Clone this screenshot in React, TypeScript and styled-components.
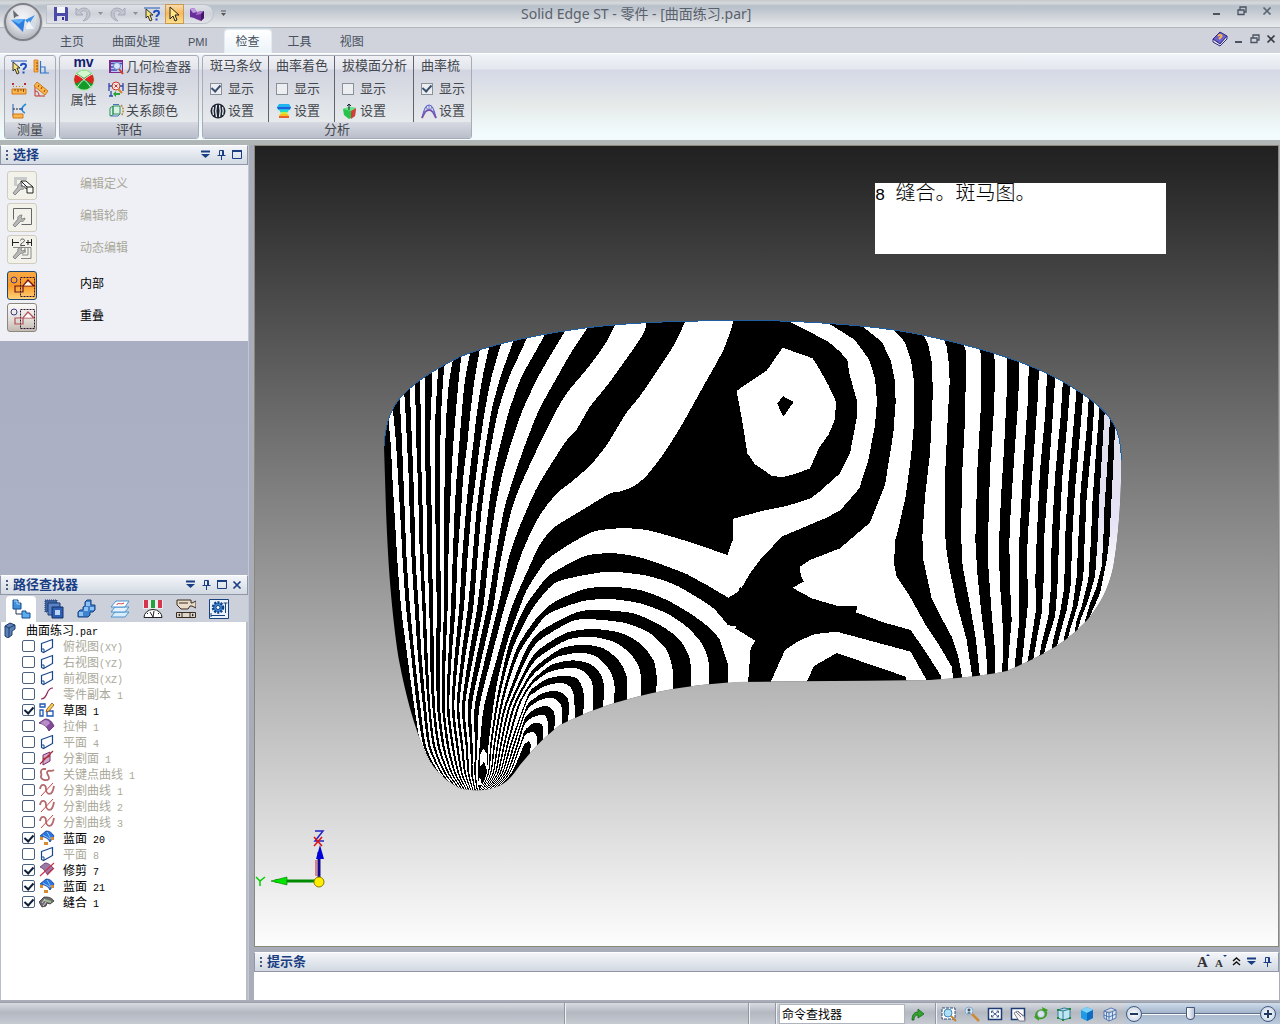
import React from "react";
import styled, { createGlobalStyle, css } from "styled-components";

const GlobalStyle = createGlobalStyle`
  * { box-sizing: border-box; }
  html, body, #root { height: 100%; }
  body { margin: 0; font-family: "Liberation Sans", "Noto Sans CJK SC", sans-serif; font-size: 12px; color: #000; overflow: hidden; }
  button, input { font: inherit; color: inherit; }
  button { padding: 0; border: 0; background: none; }
  ul { margin: 0; padding: 0; list-style: none; }
  h1, h2, h3 { margin: 0; font: inherit; }
`;

/* ---------- shell ---------- */
const Shell = styled.div`
  display: flex;
  flex-direction: column;
  height: 100vh;
  background: #a9adb9;
  position: relative;
`;
const TitleBar = styled.header`
  height: 28px;
  flex: none;
  display: flex;
  align-items: center;
  padding: 0 8px 0 46px;
  border-bottom: 1px solid #b1b6bd;
  background: linear-gradient(#c6c9cc 0, #d7dadd 3px, #b7c0ca 6px, #bfc6cf 10px, #d3d7dc 18px, #e8eaed 27px);
`;
const QuickBar = styled.div`
  display: flex;
  align-items: center;
  height: 20px;
  width: 168px;
  padding: 0 10px 0 4px;
  gap: 3px;
  border-radius: 0 10px 10px 0;
  border: 1px solid #bdc1c9;
  background: linear-gradient(#dfe1e6, #cfd2da 50%, #e1e3e8);
`;
const QuickButton = styled.button<{ $on?: boolean; $slim?: boolean }>`
  width: ${p => (p.$slim ? 10 : 19)}px;
  height: 20px;
  flex: none;
  display: flex;
  align-items: center;
  justify-content: center;
  ${p => p.$on && css`
    border: 1px solid #c79a50;
    background: linear-gradient(#f9dcae, #f8b75c 45%, #fbe08d);
  `}
`;
const WindowTitle = styled.h1`
  flex: 1;
  padding-left: 288px;
  color: #59616c;
  font: 14px/20px "Noto Sans", "Noto Sans CJK SC", sans-serif;
  white-space: nowrap;
`;
const WindowButtons = styled.div<{ $gap: number }>`
  display: flex;
  align-items: center;
  align-self: flex-start;
  height: 22px;
  gap: ${p => p.$gap}px;
  color: #4a5360;
`;
const AppButton = styled.button`
  position: absolute;
  left: 4px;
  top: 3px;
  width: 38px;
  height: 38px;
  border-radius: 50%;
  border: 2px solid #7e8187;
  background: radial-gradient(circle at 50% 35%, #f3f4f7 0, #dcdee3 45%, #b7bac1 75%, #f4f4f4 100%);
  box-shadow: 0 0 0 1px #c9ccd2;
  display: flex;
  align-items: center;
  justify-content: center;
`;
const TabBar = styled.nav`
  height: 25px;
  flex: none;
  display: flex;
  align-items: flex-end;
  gap: 6px;
  padding: 0 4px 0 49px;
  background: #d0d3db;
`;
const Tab = styled.button<{ $active?: boolean; $latin?: boolean }>`
  height: 23px;
  padding: 0 11px;
  line-height: 20px;
  font-size: ${p => (p.$latin ? 11 : 12)}px;
  color: #47515f;
  border-radius: 3px 3px 0 0;
  ${p => p.$active && css`
    background: linear-gradient(#fff, #ebf3f8);
    box-shadow: 0 0 0 1px #e6eaf0, 0 -1px 3px #bfe6ee;
  `}
`;
const Spacer = styled.span`
  flex: 1;
`;
const Ribbon = styled.section`
  flex: none;
  height: 92px;
  display: flex;
  align-items: flex-start;
  gap: 3px;
  padding: 1px 4px 0;
  border-top: 1px solid #fff;
  border-bottom: 5px solid #b0b5b6;
  background: linear-gradient(#f1f4f9 0, #e3e8ee 15px, #d4d8e6 16px, #d9dde7 26px, #e5eae9 50px, #f2fcff 82px);
`;
const Group = styled.section`
  height: 84px;
  border: 1px solid #a8acb6;
  border-radius: 3px;
  overflow: hidden;
  display: flex;
  flex-direction: column;
  color: #44484f;
  font-size: 13px;
  background: linear-gradient(#f0f1f5 0, #e3e5ec 13px, #d2d4e0 14px, #d8dae3 30px, #e6eaec 66px);
`;
const GroupBody = styled.div`
  height: 66px;
  display: flex;
`;
const GroupName = styled.h3`
  flex: 1;
  text-align: center;
  line-height: 15px;
  background: linear-gradient(#d7dae1, #b9becb);
`;
const MeasureGrid = styled.div`
  display: grid;
  grid-template-columns: 22px 22px;
  grid-auto-rows: 22px;
  place-items: center;
  padding: 0 3px;
`;
const IconButton = styled.button`
  display: flex;
  align-items: center;
  justify-content: center;
`;
const BigButton = styled.button`
  width: 47px;
  display: flex;
  flex-direction: column;
  align-items: center;
  line-height: 18px;
  font-size: 13px;
`;
const BigCaption = styled.b`
  font-size: 14px;
  line-height: 13px;
  color: #11206f;
`;
const Stack = styled.div`
  display: flex;
  flex-direction: column;
  padding: 0 7px 0 1px;
`;
const RibbonRow = styled.button`
  height: 22px;
  display: flex;
  align-items: center;
  gap: 2px;
  padding-bottom: 1px;
  line-height: 20px;
  white-space: nowrap;
`;
const AnalysisColumn = styled.div`
  display: flex;
  flex-direction: column;
  padding: 0 6px 0 7px;
  white-space: nowrap;
  & + & { border-left: 1px solid #5f646e; }
`;
const RibbonText = styled.span`
  height: 22px;
  line-height: 20px;
`;
const RibbonCheck = styled.label`
  height: 22px;
  display: flex;
  align-items: center;
  gap: 6px;
  padding-bottom: 1px;
  line-height: 20px;
`;
const Check = styled.input<{ $tree?: boolean }>`
  appearance: none;
  margin: 0;
  flex: none;
  width: ${p => (p.$tree ? 13 : 12)}px;
  height: 12px;
  border: 1px solid ${p => (p.$tree ? "#4b617f" : "#8a9098")};
  border-radius: ${p => (p.$tree ? 2 : 0)}px;
  background: ${p => (p.$tree ? "#fff" : "#eceef1")};
  display: flex;
  align-items: center;
  justify-content: center;
  &:checked::after {
    content: "";
    width: 4px;
    height: 7px;
    margin-bottom: 2px;
    border: solid ${p => (p.$tree ? "#0c1f38" : "#39506f")};
    border-width: 0 2px 2px 0;
    transform: rotate(42deg);
  }
`;

/* ---------- workspace ---------- */
const Workspace = styled.main`
  flex: 1;
  min-height: 0;
  display: flex;
  gap: 5px;
  padding-right: 1px;
`;
const Sidebar = styled.aside`
  width: 249px;
  flex: none;
  display: flex;
  flex-direction: column;
  background: linear-gradient(#a6abc0, #b3b8ca);
  border-right: 1px solid #c3c7d1;
`;
const PanelHead = styled.header`
  height: 20px;
  flex: none;
  display: flex;
  align-items: center;
  gap: 4px;
  padding: 0 5px 1px 5px;
  border: 1px solid #8f97a7;
  border-top-color: #fff;
  color: #1a3e83;
  background: linear-gradient(#f3f5f9, #d2d9e2);
`;
const PanelTitle = styled.h2`
  flex: 1;
  font-weight: 700;
  font-size: 13px;
  line-height: 18px;
`;
const PanelTools = styled.div`
  display: flex;
  align-items: center;
  gap: 5px;
`;
const SelectBody = styled.div`
  background: #eff0f6;
  padding: 6px 7px 9px;
  display: flex;
  flex-direction: column;
  gap: 3px;
`;
const SelectRow = styled.button<{ $off?: boolean; $first?: boolean }>`
  display: flex;
  align-items: flex-start;
  gap: 43px;
  height: 29px;
  line-height: 26px;
  margin-top: ${p => (p.$first ? 4 : 0)}px;
  color: ${p => (p.$off ? "#a9a899" : "#000")};
`;
const ToolFace = styled.span<{ $kind: "off" | "hot" | "plain" }>`
  width: 30px;
  height: 29px;
  border-radius: 3px;
  border: 1px solid ${p => (p.$kind === "off" ? "#cfcdbf" : p.$kind === "hot" ? "#1c4773" : "#8c8880")};
  background: ${p => p.$kind === "off" ? "#f2f2ea" : p.$kind === "hot"
    ? "linear-gradient(#f9a945, #fb9a26 50%, #ffd27a)" : "linear-gradient(#fbfaf8, #e2dcd6 60%, #c2b9b1)"};
`;
const Gap = styled.div`
  flex: 1;
`;
const PathFinder = styled.section`
  height: 425px;
  flex: none;
  display: flex;
  flex-direction: column;
`;
const FinderTabs = styled.div`
  height: 27px;
  flex: none;
  display: flex;
  padding: 1px 0 0 6px;
  gap: 3px;
  background: #ccd0da;
`;
const FinderTab = styled.button<{ $active?: boolean }>`
  width: 30px;
  display: flex;
  align-items: center;
  justify-content: center;
  border-radius: 4px 4px 0 0;
  background: ${p => (p.$active ? "#fff" : "transparent")};
`;
const Tree = styled.ul`
  flex: 1;
  min-height: 0;
  background: #fff;
  border-left: 1px solid #b9bdc9;
  border-right: 2px solid #b9bdc9;
`;
const TreeRoot = styled.li`
  height: 16px;
  display: flex;
  align-items: center;
  gap: 7px;
  padding-left: 2px;
  line-height: 16px;
`;
const TreeRow = styled.label<{ $dim: boolean }>`
  height: 16px;
  display: flex;
  align-items: center;
  gap: 4px;
  padding-left: 21px;
  line-height: 16px;
  color: ${p => (p.$dim ? "#aaa99a" : "#000")};
`;
const TreeText = styled.span<{ $root?: boolean }>`
  padding: 3px 0 0 ${p => (p.$root ? 0 : 4)}px;
  white-space: pre;
`;
const Latin = styled.span`
  font: 10px/16px "Liberation Mono", monospace;
`;
const Right = styled.div`
  flex: 1;
  min-width: 0;
  display: flex;
  flex-direction: column;
`;
const Viewport = styled.section`
  flex: 1;
  min-height: 0;
  position: relative;
  overflow: hidden;
  border: 1px solid #8a8878;
  background: linear-gradient(#202020, #fdfdfd);
`;
const Note = styled.p`
  position: absolute;
  left: 620px;
  top: 37px;
  width: 291px;
  height: 71px;
  margin: 0;
  background: #fff;
  font-size: 20px;
  line-height: 20px;
  font-weight: 300;
  white-space: pre;
`;
const NoteLatin = styled.span`
  font-family: "Liberation Mono", monospace;
  font-size: 17px;
`;
const Model = styled.svg`
  position: absolute;
  left: 125px;
  top: 164px;
`;
const Triad = styled.svg`
  position: absolute;
  left: 0;
  top: 680px;
`;
const PromptPanel = styled.section`
  margin-top: 5px;
  flex: none;
`;
const PromptText = styled.div`
  height: 28px;
  background: #fff;
`;

/* ---------- status bar ---------- */
const StatusBar = styled.footer`
  height: 22px;
  margin-top: 2px;
  flex: none;
  display: flex;
  align-items: center;
  border-top: 1px solid #9a9fa8;
  background: linear-gradient(#d8dbe1, #b3b8c1 45%, #c6cad1);
`;
const StatusCell = styled.div<{ $w?: number }>`
  height: 21px;
  border-right: 1px solid #9298a2;
  box-shadow: 1px 0 #eef0f3;
  ${p => (p.$w ? `width: ${p.$w}px; flex: none;` : "flex: 1;")}
`;
const CommandBox = styled.input`
  width: 126px;
  height: 20px;
  margin: 0 5px 0 3px;
  padding: 0 2px;
  border: 1px solid #aeb4bd;
  background: #fff;
  outline: 0;
`;
const StatusIcons = styled.div`
  display: flex;
  align-items: center;
  gap: 7px;
  padding: 0 7px 0 5px;
`;
const Zoomer = styled.div`
  display: flex;
  align-items: center;
  height: 21px;
  padding: 0 4px 0 1px;
  background: linear-gradient(#cfdceb, #a5b7cd 45%, #bccbdc);
`;
const RoundButton = styled.button`
  width: 16px;
  height: 16px;
  border-radius: 50%;
  border: 1px solid #40597f;
  background: radial-gradient(#fff, #bccadd);
  display: flex;
  align-items: center;
  justify-content: center;
`;
const ZoomRange = styled.input`
  appearance: none;
  width: 118px;
  height: 18px;
  margin: 0;
  background: linear-gradient(transparent 8px, #5f6f85 8px, #5f6f85 9px, #fff 9px, #fff 10px, transparent 10px);
  &::-webkit-slider-thumb {
    appearance: none;
    width: 9px;
    height: 13px;
    border: 1px solid #45597a;
    border-radius: 1px 1px 5px 5px;
    background: linear-gradient(90deg, #fff, #b9c6d8);
  }
`;

/* ---------- small drawings ---------- */
const Glyph = styled.svg`
  flex: none;
  display: block;
`;
type GProps = { w?: number; h?: number; box?: string; children: React.ReactNode };
const G = ({ w = 16, h = 16, box, children }: GProps) => (
  <Glyph width={w} height={h} viewBox={box || `0 0 ${w} ${h}`} fill="none" aria-hidden="true">{children}</Glyph>
);

const Caret = () => <G w={7} h={5}><path d="M1 1h5L3.500 4z" fill="#8b909a" /></G>;
const Arrow = () => <path d="M3 1v12l3-3 2 5 2-1-2-5h4z" fill="#ffe680" stroke="#222" />;
const Save = () => <G><path d="M1 1h13l1 1v13H1z" fill="#4c4ca8" /><path d="M4 1h8v6H4z" fill="#f5f6fb" /><path d="M4 10h8v5H4z" fill="#dcdde9" /><path d="M9 11h2v3H9z" fill="#33338c" /></G>;
const Undo = ({ flip }: { flip?: boolean }) => (
  <G><g transform={flip ? "translate(16 0) scale(-1 1)" : undefined}><path d="M1 2v7h7L5.500 6.500C8 4 12 4 12 8c0 3-2 5-4 7 5-1 7-4 7-7 0-6-7-8-11.500-3.500z" fill="#c3c6d0" stroke="#9da1ae" strokeWidth=".8" /></g></G>
);
const Smart = () => <G w={17}><path d="M0 2h16" stroke="#2458b8" /><path d="M2 3v9l2-2 2 5 2-1-2-5h3z" fill="#f4e27a" stroke="#222" strokeWidth=".9" /><path d="M10 7c0-3 5-3 5 0 0 2-2.500 2-2.500 4M12.500 12.500v2" stroke="#1d4fc0" strokeWidth="2" /></G>;
const Prism = () => <G><path d="M1 3l4-1 3 4 7-1v7l-3 3-5-2-2-1-4-1z" fill="#6a2f9a" /><path d="M1 3l4-1 3 4-4 1z" fill="#c59be0" /><path d="M8 6l7-1-3 3-5 1z" fill="#a873cc" /><path d="M12 8l3-3v7l-3 3z" fill="#451466" /></G>;
const Square = () => <G><path d="M1 1h4v12H1z" fill="#f9ae48" stroke="#cf7614" strokeWidth=".8" /><path d="M3 4h2M3 7h2M3 10h2" stroke="#8a4a06" /><path d="M7.500 2v12H16M7.500 8h4.500v6" stroke="#2f74c8" strokeWidth="1.200" /></G>;
const Ruler = () => <G><path d="M1 8h14v5H1z" fill="#fbb54f" stroke="#d07a17" /><path d="M4 8v2M7 8v3M10 8v2M12.500 8v3" stroke="#8a4a06" /><path d="M1 2h2v2H1zM13 2h2v2h-2z" fill="#a33" /><path d="M2 5.500h12" stroke="#d07a17" strokeDasharray="1 2" /></G>;
const Angle = () => <G><path d="M2 4v11h10M2 10c3 0 4 2 4 5" stroke="#c2362b" /><path d="M4 1l11 9-3 4L1 5z" fill="#fbb54f" stroke="#d07a17" /><path d="M6 4l-1 2M9 6L8 8M12 9l-1 2" stroke="#8a4a06" /></G>;
const Normal = () => <G><path d="M2 1v12" stroke="#2b5fb7" /><path d="M2 6h10" stroke="#223" strokeDasharray="2 1" /><path d="M15 1c-5 3-5 7-1 9" stroke="#2b8fd7" strokeWidth="1.500" /><path d="M8 6l4-2v4z" fill="#2b6fc7" /><path d="M2 11h10v4H2z" fill="#fbb54f" stroke="#d07a17" /></G>;
const Ball = () => (
  <G w={24} h={22}>
    <circle cx="12" cy="11" r="10.500" fill="#8fe88f" /><circle cx="12" cy="11" r="9.500" fill="#149a28" />
    <path d="M12 10L4 5a9.500 9.500 0 0 0-.500 10zM12 10l8-5a9.500 9.500 0 0 1 .500 10z" fill="#e02424" />
    <path d="M5 4.500a9.500 9.500 0 0 1 14 0L12 9z" fill="#d4f7d0" />
    <path d="M3.500 5C8 7 15 12 18.500 18M20.500 5C16 7 9 12 5.500 18" stroke="#fff" strokeWidth=".9" />
  </G>
);
const Inspect = () => <G><path d="M1 1h14v13H1z" fill="#7b2a8e" /><path d="M3 3h11v10H3z" fill="#b9c9f4" /><path d="M3 4.500h11M3 8h7M3 11h6" stroke="#4a4ab0" strokeWidth="1.500" /><circle cx="9" cy="7" r="3.500" fill="#d4e6fc" stroke="#6683c9" /><path d="M11 10l4 5" stroke="#d7401f" strokeWidth="2" /></G>;
const Seek = () => <G><path d="M1 2v8M15 2v8M1 5h3M12 5h3M1 15h4M3 10v5" stroke="#2a4aa8" strokeWidth="1.300" /><circle cx="8" cy="5" r="4" fill="#fde7e4" stroke="#c9352b" /><path d="M6.500 3.500l3 3m0-3l-3 3" stroke="#c9352b" /><path d="M10 8l4 4" stroke="#d3822e" strokeWidth="2" /><path d="M5 13l3-3v2h4v2H8v2z" fill="#2aa43a" /></G>;
const Relation = () => <G><path d="M2 5l3-2v9l-3 1zM5 3h7v8H5z" fill="#d9f1e0" stroke="#2f8f62" /><path d="M3 13h7l2-2M5 1.500h6" stroke="#4a72c0" /><path d="M13 2c3 3 3 8 0 11" stroke="#b98c3a" strokeWidth="1.500" strokeDasharray="2 1" /></G>;
const Zebra = () => <G><circle cx="8" cy="8" r="7.500" fill="#1d2430" /><path d="M3.500 4c-1 3-1 5 0 8M6.500 2c-1 4-1 8 0 12M9.500 2c1 4 1 8 0 12M12.500 4c1 3 1 5 0 8" stroke="#e9eef5" strokeWidth="1.300" /></G>;
const Shade = () => <G><path d="M3 1h10l2 3-1 3H2L1 4z" fill="#1fb6f0" /><path d="M1 4h14l-1 2H2z" fill="#1f5fd8" /><path d="M3 7h10l-2 3H5z" fill="#23d9c8" /><path d="M5 9h6v3H5z" fill="#c9ee31" /><path d="M4 11h8l1 2H3z" fill="#f9c021" /><path d="M3 13h10v2H3z" fill="#e8622a" /></G>;
const Draft = () => <G><path d="M1 6l6-2 7 1-1 8-6 3-5-4z" fill="#27c44b" /><path d="M14 5l-1 8-4 3V7z" fill="#d93a3a" /><path d="M1 6l6-2 7 1-5 3z" fill="#6ce68a" /><path d="M7 7V1M5 3l2-2 2 2" stroke="#123" /></G>;
const Comb = () => <G><path d="M1 15C3 5 5 2 8 2s5 3 7 13" stroke="#5b62c9" strokeWidth="1.200" /><path d="M1 15c3-6 4-8 7-8s4 2 7 8" stroke="#7a4fa8" strokeWidth="1.800" /><path d="M3 8l2 2M5 4l2 3M8 2v5M11 4L9 7M13 8l-2 2" stroke="#6c74d0" /></G>;

const Tri = () => <G w={11} h={9}><path d="M1 1.500h9" stroke="#1a3e83" strokeWidth="2" /><path d="M1 4h9L5.500 8z" fill="#1a3e83" /></G>;
const Pin = () => <G w={11} h={10}><path d="M3.500.5h4v5h-4zM6.500.5v5M1.500 5.500h8M5.500 6v4" stroke="#1a3e83" /></G>;
const Box = () => <G w={10} h={9}><path d="M.5 1h9v7.500h-9z" stroke="#1a3e83" /><path d="M0 1h10" stroke="#1a3e83" strokeWidth="2" /></G>;
const Cross = ({ c = "#1a3e83" }: { c?: string }) => <G w={10} h={10}><path d="M1.500 1.500l7 7m0-7l-7 7" stroke={c} strokeWidth="1.700" /></G>;
const Min = () => <G w={10} h={10}><path d="M1 8h7" stroke="currentColor" strokeWidth="2" /></G>;
const Restore = () => <G w={10} h={10}><path d="M3 3.500V1h6v5H7M1 4h6v4.500H1z" stroke="currentColor" strokeWidth="1.300" /></G>;
const Grip = () => <G w={3} h={10}><path d="M0 1h2M0 5h2M0 9h2" stroke="#4a5a78" strokeWidth="2" /></G>;

const Wrench = () => <path d="M5 21l5-6c-1-2 1-4 4-4l-1 3 1 1 3-1c0 3-3 4-4 3l-6 6z" fill="#b9b9b9" stroke="#777" strokeWidth=".8" />;
const selectArt = {
  define: <G w={28} h={27}><path d="M6 5h13v3H9v6H6z" fill="#c8cacb" /><path d="M13 9h5l7 6v6h-6v-6zM19 15h6M13 9v4l6 4" stroke="#222" fill="#fafaf6" /><Wrench /></G>,
  profile: <G w={28} h={27}><path d="M5.500 4.500h18v16h-10M5.500 4.500v11" stroke="#666" /><Wrench /></G>,
  dynamic: <G w={28} h={27}><path d="M4.500 3v7M23.500 3v7M5 6.500h6M18 6.500h5M20 4v5" stroke="#222" /><path d="M12.500 4.500c0-2 4-2 4 0 0 2-4 2-4 5h4.500" stroke="#555" /><path d="M5 11.500h18v11H13M20 12v7h-6M17 12v5" stroke="#888" /><Wrench /></G>,
  shapes: (c: string) => <G w={28} h={27}><path d="M12.500 5.500h14v19h-14z" stroke="#261334" strokeDasharray="2 1" /><circle cx="6" cy="8" r="3" stroke="#3b3b8c" /><path d="M7 14h8v6H7zM15 14h11l-6-6z" stroke={c} strokeWidth="1.200" /><path d="M16 13.500h8l-4-4z" fill="#fff" /></G>,
};

const finderArt = [
  <G w={20} h={20}><path d="M5 9v6h6" stroke="#26364f" /><path d="M2 1h5v3h3v6H2z" fill="#3f90dc" stroke="#164b8f" /><path d="M3 2h3v3h3" stroke="#a9d6fb" /><path d="M11 12h4v2h4v5h-8z" fill="#5aaef0" stroke="#164b8f" /></G>,
  <G w={20} h={20}><path d="M1 1h12v12H1z" fill="#40629c" stroke="#1d3a74" strokeDasharray="1 1" /><path d="M4 4h12v12H4z" fill="#5b82c4" stroke="#1d3a74" /><path d="M8 8h11v11H8z" fill="#2f5fb3" stroke="#12306b" /><path d="M11 11h5v5h-5z" fill="#bcd4f5" /></G>,
  <G w={20} h={20}><path d="M8 3l2-2h4v5h4v5l-2 2h-3v3l-2 2H1v-5l2-2h3V8l2-1z" fill="#3f82cf" stroke="#153f80" /><path d="M9 3h4v4H9zM13 8h4v3h-4zM7 8h4v4H7zM2 13h4v4H2z" fill="#8fc2f3" /></G>,
  <G w={20} h={20}><path d="M5 13h14l-4 5H1z" fill="#d8ecfb" stroke="#4b93cf" /><path d="M5 8h14l-4 5H1z" fill="#e6f3fd" stroke="#4b93cf" /><path d="M6 2h13l-4 6H1z" fill="#fff" stroke="#4b93cf" /><path d="M7 6c0-3 4 0 7-2" stroke="#c33" /></G>,
  <G w={20} h={20}><path d="M0 1h20v9H0z" fill="#ececec" /><path d="M1 1h4v8H1zM15 1h4v8h-4z" fill="#d5364f" /><path d="M8 1h4v8H8z" fill="#23a33e" /><path d="M1 18.500a9 8 0 0 1 18 0z" fill="#fff" stroke="#222" /><path d="M10 18l-3-5M10 18l1-6M4 14l1 1M16 14l-1 1" stroke="#222" /></G>,
  <G w={20} h={20}><path d="M1 1h14v3h1l4-2v7l-4-2h-2l-2 3H5L1 6z" fill="#e9dcc9" stroke="#3a2b1d" /><path d="M3 4h9" stroke="#3a2b1d" /><path d="M.5 13.500h19v5H.5z" fill="#dcd6cc" stroke="#3a2b1d" /><path d="M6 14v4M14 14v4" stroke="#3a2b1d" /><path d="M4 14.500v3L2 16zM16 14.500v3l2-1.500z" fill="#222" /></G>,
  <G w={20} h={20}><path d="M.5.5h19v19H.5z" fill="#eaf3fc" stroke="#16427f" /><circle cx="9" cy="8.500" r="5" fill="#3f87d6" stroke="#123f80" strokeWidth="2.500" strokeDasharray="2 1.200" /><circle cx="9" cy="8.500" r="2" fill="#fff" stroke="#123f80" /><path d="M2 16.500h14M16.500 4v10M2 14v4M14.500 4h4" stroke="#16427f" /></G>,
];
const treeArt: Record<string, React.ReactNode> = {
  plane: <G><path d="M2.500 5.500l11-4v8l-9 5-2-1z" stroke="#17478f" strokeWidth="1.200" /><path d="M3 11h2v3" stroke="#17478f" /></G>,
  curve: <G><path d="M2 13c8 0 4-11 12-11" stroke="#8c2358" strokeWidth="1.200" /></G>,
  sketch: <G><path d="M1 2h5v3H1zM1 8h3v6H1zM8 9h6v5H8z" stroke="#1c55b5" strokeWidth="1.300" /><path d="M7 10l1-3 5-6 2 2-5 6z" fill="#f3cf54" stroke="#8a4a1a" strokeWidth=".8" /></G>,
  extrude: <G><path d="M0 5l6-4c5 0 7 3 9 7l-5 5C8 9 5 6 0 5z" fill="#84499b" stroke="#532668" strokeWidth=".8" /><path d="M1 5l5-3c2 0 4 1 5 3L7 9C5 7 3 5 1 5z" fill="#b78cc7" /></G>,
  face: <G><path d="M4 5l7-3v9l-7 4z" fill="#cfaacd" stroke="#7c2f6d" /><path d="M1 14L14 1M4 9l7-3" stroke="#b0282f" strokeWidth="1.200" /></G>,
  key: <G><path d="M7 3H4c-5 2 0 5-2 7-1 4 8 6 8 2 0-3-4-5-1-7 2-1 3 1 6-1" stroke="#b46a6e" strokeWidth="1.800" /></G>,
  split: <G><path d="M1 7c1-6 6-5 6 0s6 9 8-3" stroke="#b46a6e" strokeWidth="1.800" /><path d="M2 14L14 1" stroke="#c44" /></G>,
  blue: <G><path d="M1 6l6-5c4 0 6 2 8 5l-4 6C9 8 6 7 1 6z" fill="#2a74dd" stroke="#0f3c8c" strokeWidth=".8" /><path d="M4 5l7 4M8 2l4 7" stroke="#8cc0fa" /><path d="M1 7h3v3H1zM5 12h4v3H5zM12 7h3v3h-3z" fill="#d98b32" /></G>,
  trim: <G><path d="M1 5l5-4c3 0 6 2 8 5l-6 6C6 9 4 6 1 5z" fill="#9b7aa6" stroke="#5d3d69" strokeWidth=".8" /><path d="M1 14L15 1M8 13l7-7" stroke="#c8364f" strokeWidth="1.200" /></G>,
  stitch: <G><path d="M0 8l5-5c4 0 7 0 10 4l-4 3-3-1-1 3-4 1z" fill="#6d6a70" stroke="#333" strokeWidth=".8" /><path d="M5 6l7 2" stroke="#9dbf8f" strokeWidth="2" /><path d="M3 9l3-4M4 12l3-4" stroke="#e3c6dc" /></G>,
};

const viewIcons: [string, React.ReactNode][] = [
  ["缩放区域", <G><path d="M1 2h13v11H1z" fill="#fff" stroke="#2a4a7a" strokeDasharray="3 1" /><circle cx="7" cy="7" r="4" fill="#aee0f4" stroke="#3f87b8" /><path d="M10 10l5 5" stroke="#c9822c" strokeWidth="2" /></G>],
  ["缩放", <G><circle cx="5" cy="5" r="4" fill="#cfe9fa" stroke="#8fa7c5" /><path d="M5 2.500v3M3.500 4h3M3.500 7h3" stroke="#123" /><path d="M8 8l7 7" stroke="#d08a34" strokeWidth="2.500" /></G>],
  ["适合", <G><path d="M1.500 2.500h13v11h-13z" fill="#fff" stroke="#1e3c74" strokeWidth="1.500" /><path d="M5 5.500l6 5M11 5.500l-6 5M4.500 7V5h2M9.500 5h2v2M4.500 9v2h2M11.500 9v2h-2" stroke="#1e3c74" strokeWidth=".8" /></G>],
  ["平移", <G><path d="M1.500 2.500h13v11h-13z" fill="#fff" stroke="#1e3c74" strokeWidth="1.500" /><path d="M4 7l3-2 7 5 1 5H9z" fill="#f5f5f8" stroke="#667" strokeWidth=".8" /><path d="M6 6l5 5M8 5l5 5" stroke="#667" strokeWidth=".8" /></G>],
  ["旋转", <G><path d="M3 10c0-4 3-6 8-6M13 6c1 4-3 7-8 6" stroke="#37a01f" strokeWidth="2" /><path d="M9 1l6 3-4 4zM6 15l-5-4 4-3z" fill="#37a01f" /><circle cx="8" cy="8" r="3.500" fill="#d9e6f0" stroke="#8b9aa8" strokeWidth=".6" /></G>],
  ["视图方向", <G><path d="M2 4l5 1v9l-5-2zM7 5l7-2v9l-7 2M2 4l6-2 6 1" fill="#bfe5f3" stroke="#2c7d94" /><path d="M1 3h2v2H1zM13 2h2v2h-2zM6 13h2v2H6zM1 11h2v2H1zM13 11h2v2h-2z" fill="#1f8a2e" /></G>],
  ["着色", <G><path d="M8 1l6 3v8l-6 3-6-3V4z" fill="#1f9be6" /><path d="M8 1l6 3-6 3-6-3z" fill="#7fd3fb" /><path d="M8 7l6-3v8l-6 3z" fill="#0f6cc0" /></G>],
  ["视图样式", <G><path d="M2 5l5 2v8l-5-3zM7 7l7-3v8l-7 3M2 5l7-3 5 2M10.500 6v7M7 11l7-3M2 9l5 2M4.500 6v7" stroke="#3a63a6" strokeWidth=".8" fill="#d9e6f5" /></G>],
];

/* ---------- zebra-striped surface, drawn in thirds of a pixel ---------- */
type P = [number, number];
const parse = (s: string): P[] => s.trim().split(/\s+/).map(t => t.split(",").map(Number) as P);
const curve = (pts: P[], first = "M") => {
  let d = `${first}${pts[0][0]} ${pts[0][1]}`;
  for (let i = 0; i < pts.length - 1; i++) {
    const a = pts[Math.max(0, i - 1)], b = pts[i], c = pts[i + 1], e = pts[Math.min(pts.length - 1, i + 2)];
    const k = 8;
    d += `C${b[0] + (c[0] - a[0]) / k} ${b[1] + (c[1] - a[1]) / k} ${c[0] - (e[0] - b[0]) / k} ${c[1] - (e[1] - b[1]) / k} ${c[0]} ${c[1]}`;
  }
  return d;
};
const band = (a: P[], b: P[]) => curve(a) + curve([...b].reverse(), "L") + "Z";

const OUTLINE = "M12 410C14 370 20 340 32 310C60 240 150 185 240 140C330 105 430 82 560 62C680 42 850 32 1060 32L1200 33C1400 40 1540 55 1640 78C1780 108 1930 150 2040 210C2110 250 2170 290 2200 340C2218 370 2224 400 2224 450C2224 560 2216 680 2200 770C2185 840 2160 880 2130 920C2060 1000 1990 1035 1880 1083C1800 1100 1720 1105 1650 1110L1460 1112L1080 1115C960 1122 870 1135 780 1158C680 1182 600 1215 540 1245C480 1290 450 1330 420 1365C395 1400 380 1425 330 1437C300 1444 270 1442 240 1435C200 1415 175 1390 150 1355C100 1260 70 1120 55 1040C35 900 25 780 18 600Z";
const TOP_EDGE = "M12 410C14 370 20 340 32 310C60 240 150 185 240 140C330 105 430 82 560 62C680 42 850 32 1060 32L1200 33C1400 40 1540 55 1640 78C1780 108 1930 150 2040 210C2110 250 2170 290 2200 340C2218 370 2224 400 2224 450";

// upper part of every fan stripe: left edge / right edge, from the rim down to y = 750
const fanTops: [string, string][] = [
  ["24,320 32,400 37,500 43,600 52,750", "38,290 48,400 54,500 60,600 68,750"],
  ["58,250 61,300 66,400 70,500 74,600 80,750", "72,240 76,300 81,400 86,500 89,600 95,750"],
  ["88,220 92,300 96,400 100,500 103,600 107,750", "104,215 107,300 109,400 113,500 116,600 120,750"],
  ["119,195 122,300 122,400 125,500 128,600 131,750", "135,190 135,300 135,400 137,500 140,600 143,750"],
  ["157,170 155,250 151,350 152,500 155,600 156,750", "175,165 170,250 165,350 164,500 166,600 168,750"],
  ["196,150 190,200 184,300 181,400 180,500 180,600 181,750", "220,145 208,210 200,300 196,400 194,500 193,600 193,750"],
  ["245,130 237,200 228,300 220,400 214,500 210,600 205,750", "272,120 255,210 246,300 238,400 230,500 224,600 218,750"],
  ["302,105 285,200 272,300 262,400 250,500 243,600 232,750", "330,100 308,200 292,300 280,400 268,500 258,600 246,750"],
  ["368,85 335,200 315,300 300,400 288,500 275,600 262,750", "405,80 362,200 335,300 318,400 303,500 290,600 277,750"],
  ["447,70 420,130 388,200 355,300 335,400 318,500 305,600 292,750", "498,65 475,110 425,200 388,300 362,400 340,500 325,600 308,750"],
  ["560,55 530,105 475,200 428,300 393,400 365,500 345,600 325,750", "625,50 575,125 532,200 477,300 437,400 402,500 372,600 345,750"],
  ["706,42 680,95 630,165 560,250 530,300 482,395 420,530 392,610 362,750", "800,38 785,80 690,215 630,290 590,358 557,395 475,525 425,635 400,700 385,750"],
  ["917,30 885,100 830,185 775,265 740,307 682,402 632,465 575,515 540,542 505,580 468,635 440,695 418,750", "1062,30 1030,120 965,238 905,345 855,425 800,497 762,528 720,545 688,551 620,592 523,652 480,703 455,755"],
];
// x positions of both edges further down, at y = 890, 1040, 1190
const fanLower = [
  [63, 78, 82, 94, 103, 111], [90, 104, 104, 114, 121, 129], [116, 127, 125, 133, 138, 144], [137, 148, 143, 150, 151, 157],
  [160, 170, 161, 169, 165, 171], [183, 192, 180, 187, 180, 186], [203, 213, 197, 205, 194, 200], [227, 238, 215, 224, 208, 215],
  [252, 264, 235, 244, 223, 230], [280, 292, 256, 266, 238, 246], [310, 322, 280, 290, 255, 263], [340, 354, 306, 317, 275, 284],
  [374, 396, 335, 352, 298, 312],
];
const fan = fanTops.map(([l, r], i) => {
  const q = fanLower[i];
  const tail = (side: number): P[] => {
    const k = i * 2 + side;
    return [[q[side], 890], [q[2 + side], 1040], [q[4 + side], 1190], [124 + k * 7, 1310], [168 + k * 5, 1390], [222 + k * 3, 1445]];
  };
  return band([...parse(l), ...tail(0)], [...parse(r), ...tail(1)]);
});

// arches: left shoulder, then crest and right leg of each edge
const archEdges: [string, string][] = [
  ["420,890 440,840 475,785 500,750 560,708 640,665", "720,655 800,660 925,695 1042,735"],
  ["388,1000 430,900 470,840 512,793 615,738", "705,730 790,745 920,792 980,825 1045,863"],
  ["400,1010 455,900 520,822 590,800", "690,785 800,797 880,822 940,855 1000,895 1045,945 1110,1010 1104,1120"],
  ["413,1010 465,930 520,878 610,838", "690,830 780,840 860,870 930,910 990,955 1035,1010 1043,1060 1043,1125"],
  ["422,1020 490,925 530,900 610,873", "690,867 780,880 860,910 920,950 965,1000 985,1050 987,1130"],
  ["433,1030 480,965 590,907", "660,900 760,910 840,945 900,990 930,1050 933,1135"],
  ["440,1045 480,990 580,932", "655,929 740,940 810,970 860,1020 878,1080 878,1145"],
  ["445,1060 482,1015 560,968", "640,957 720,968 780,1000 820,1050 830,1100 828,1155"],
  ["448,1075 485,1035 560,990", "630,980 700,995 750,1030 780,1080 783,1165"],
  ["450,1090 485,1055 545,1015", "610,1004 670,1015 715,1050 740,1100 742,1180"],
  ["450,1105 485,1072 530,1041", "600,1028 650,1040 685,1075 703,1120 702,1195"],
  ["450,1120 480,1090 520,1062", "580,1051 630,1062 660,1090 672,1130 668,1205"],
  ["445,1138 475,1107 510,1085", "570,1073 610,1083 635,1115 640,1160 637,1220"],
  ["445,1153 470,1127 500,1107", "550,1097 590,1105 608,1135 612,1170 608,1235"],
  ["442,1170 465,1147 490,1130", "540,1118 570,1130 582,1160 585,1240"],
  ["440,1188 460,1168 485,1151", "525,1142 555,1155 567,1180 563,1250"],
  ["438,1205 475,1173", "515,1163 540,1180 547,1210 543,1262"],
  ["436,1222 470,1195", "500,1188 520,1202 525,1230 520,1275"],
  ["434,1243 460,1221", "490,1214 500,1225 505,1250 502,1285"],
  ["434,1262 455,1243", "470,1238 487,1245 490,1270 488,1297"],
  ["433,1280 448,1269", "460,1266 470,1280 472,1315"],
  ["432,1305 440,1298", "447,1294 452,1305 450,1330"],
];
const archLeft = (i: number): P[] => {
  const p: P[] = [[296 + i * 2, 1445], [320 + i * 3.500, 1390]];
  if (i < 20) p.push([326 + i * 5, 1300]);
  if (i < 13) p.push([340 + i * 6.500, 1190]);
  if (i < 5) p.push([355 + i * 9, 1100]);
  if (i < 1) p.push([384, 990]);
  return p;
};
const arches: string[] = [];
for (let i = 0; i < archEdges.length; i += 2) {
  const edge = (k: number) => [...archLeft(k), ...parse(archEdges[k][0]), ...parse(archEdges[k][1])];
  arches.push(band(edge(i), edge(i + 1)));
}

const rightStripes = [
  "540,55 565,105 577,165 578,260 570,430 555,560 547,680 550,750 575,865 600,915 635,980 655,1040 670,1120 697,1120 697,1102 680,990 650,880 627,770 618,710 615,660 616,480 623,330 629,215 627,165 620,110 600,55",
  "660,70 677,120 678,165 675,330 665,520 664,690 668,770 690,885 708,990 722,1120 744,1120 738,1020 722,890 712,790 706,690 712,480 722,300 723,200 722,130 710,80",
  "757,90 765,160 763,280 750,480 744,690 745,770 755,910 765,1020 766,1110 785,1100 790,1020 787,920 779,810 777,700 783,560 793,400 800,250 802,100",
  "838,110 835,270 822,450 810,640 808,700 810,820 815,930 808,1010 802,1090 822,1090 828,1030 838,930 838,820 838,690 848,500 863,280 868,120",
  "899,130 893,270 880,450 866,640 862,710 863,890 852,1000 842,1090 858,1080 872,1000 888,900 886,810 890,690 900,480 915,320 924,140",
  "949,150 938,320 925,500 912,690 911,810 905,910 890,990 876,1070 894,1060 905,1000 925,920 932,840 935,690 945,500 962,320 972,160",
  "994,180 983,330 967,500 957,690 952,840 945,920 920,1000 908,1050 928,1050 940,990 960,910 973,830 975,690 985,520 1002,330 1014,190",
  "1034,200 1020,370 1005,540 996,690 993,820 980,900 958,980 946,1030 965,1020 975,970 998,890 1010,800 1015,690 1022,540 1040,360 1050,210",
  "1067,230 1055,400 1040,560 1034,690 1030,800 1012,890 990,960 978,1010 1000,990 1010,930 1025,890 1045,810 1053,690 1057,580 1070,400 1082,250",
];
const lavenderStripes = [
  "1097,260 1088,400 1078,560 1073,690 1065,800 1045,870 1025,920 1010,970 1033,940 1050,880 1070,830 1085,770 1090,690 1093,600 1103,450 1112,290",
  "1127,320 1118,500 1108,690 1100,750 1080,850 1045,930 1160,930 1160,320",
];

const ZebraSurface = () => (
  <Model width="750" height="490" viewBox="0 0 2250 1470" shapeRendering="crispEdges" role="img" aria-label="斑马图">
    <defs>
      <clipPath id="body"><path d={OUTLINE} /></clipPath>
      <linearGradient id="lav" x1="0" y1="0" x2="0" y2="1"><stop offset="0" stopColor="#e2dfea" /><stop offset=".5" stopColor="#e4e2f4" /><stop offset=".8" stopColor="#fff" /></linearGradient>
    </defs>
    <g clipPath="url(#body)">
      <path d="M0 0H2250V1470H0z" fill="#000" />
      <g fill="#fff">
        {fan.map((d, i) => <path key={i} d={d} />)}
        {arches.map((d, i) => <path key={i} d={d} />)}
        <path d="M300 1335L310 1315L320 1330L323 1385L312 1355L299 1372zM292 1425L300 1400L306 1425z" />
        <g transform="translate(1080 0)">
          <path d="M-10 243L0 235L80 182L128 113L218 145L240 180L265 225L288 275L285 328L265 375L238 412L210 475L165 492L125 502L95 497L45 463L22 430L8 340z" />
          <path d="M140 30L265 95L300 125L322 150L328 190L350 270L350 325L330 430L300 490L235 548L210 566L140 588L70 602L-20 626L-20 685L-38 735L-160 695L-160 792L-100 825L-35 863L0 842L30 790L60 750L125 680L255 625L300 602L358 535L385 450L405 345L411 275L405 205L388 150L345 90L250 30z" />
          <path d="M350 35L425 95L452 150L464 210L467 275L460 370L435 525L390 638L300 715L210 750L180 770L182 795L192 815L157 833L215 865L290 887L352 887L348 907L430 937L512 960L560 1030L603 1098L603 1125L642 1125L635 1070L600 1010L560 950L510 860L470 800L462 760L466 690L473 665L497 560L513 440L523 330L522 215L513 150L495 97L445 40z" />
          <path d="M90 1120L115 1040L135 1020L175 993L225 972L290 965L512 1025L565 1120L502 1120L497 1100L290 1029L222 1068L198 1120z" />
          {rightStripes.map((p, i) => <polygon key={i} points={p} />)}
          <g fill="url(#lav)">{lavenderStripes.map((p, i) => <polygon key={i} points={p} />)}</g>
          <path d="M130 259L161 276L130 320L111 280z" fill="#000" />
          <path d="M24 1120L32 1010L50 990L-20 955L-40 948L0 830L60 900L180 920L90 1120z" fill="#000" />
        </g>
        <path d="M1040 945L1070 950L1065 955L1126 992L1112 1015L1104 1120L1043 1120L1043 1060L1020 990z" />
      </g>
    </g>
    <path d={TOP_EDGE} fill="none" stroke="#1f5f9f" strokeWidth="3" />
  </Model>
);

/* ---------- data ---------- */
const tree: [string, string, string, boolean][] = [
  ["plane", "俯视图", "(XY)", false], ["plane", "右视图", "(YZ)", false], ["plane", "前视图", "(XZ)", false],
  ["curve", "零件副本", " 1", false], ["sketch", "草图", " 1", true], ["extrude", "拉伸", " 1", false],
  ["plane", "平面", " 4", false], ["face", "分割面", " 1", false], ["key", "关键点曲线", " 1", false],
  ["split", "分割曲线", " 1", false], ["split", "分割曲线", " 2", false], ["split", "分割曲线", " 3", false],
  ["blue", "蓝面", " 20", true], ["plane", "平面", " 8", false], ["trim", "修剪", " 7", true],
  ["blue", "蓝面", " 21", true], ["stitch", "缝合", " 1", true],
];
const analysis: [string, boolean, React.ReactNode][] = [
  ["斑马条纹", true, <Zebra />], ["曲率着色", false, <Shade />], ["拔模面分析", false, <Draft />], ["曲率梳", true, <Comb />],
];
const tabs = ["主页", "曲面处理", "PMI", "检查", "工具", "视图"];

const Tool = ({ label, children }: { label: string; children: React.ReactNode }) => (
  <IconButton aria-label={label}>{children}</IconButton>
);

export default function App() {
  return (
    <Shell>
      <GlobalStyle />
      <TitleBar>
        <QuickBar>
          <QuickButton aria-label="保存"><Save /></QuickButton>
          <QuickButton aria-label="撤销"><Undo /></QuickButton>
          <QuickButton $slim aria-label="撤销列表"><Caret /></QuickButton>
          <QuickButton aria-label="重做"><Undo flip /></QuickButton>
          <QuickButton $slim aria-label="重做列表"><Caret /></QuickButton>
          <QuickButton aria-label="智能测量"><Smart /></QuickButton>
          <QuickButton $on aria-label="选择"><G><Arrow /></G></QuickButton>
          <QuickButton aria-label="零件"><Prism /></QuickButton>
        </QuickBar>
        <QuickButton aria-label="自定义"><G w={7} h={7}><path d="M1 1h5" stroke="#555" /><path d="M1 3h5L3.500 6z" fill="#555" /></G></QuickButton>
        <WindowTitle>{"Solid Edge ST - 零件 - [曲面练习.par]"}</WindowTitle>
        <WindowButtons $gap={15}>
          <Tool label="最小化"><Min /></Tool><Tool label="还原"><Restore /></Tool><Tool label="关闭"><Cross c="#5a6370" /></Tool>
        </WindowButtons>
      </TitleBar>
      <TabBar>
        {tabs.map(t => <Tab key={t} $active={t === "检查"} $latin={t === "PMI"}>{t}</Tab>)}
        <Spacer />
        <WindowButtons $gap={6}>
          <Tool label="帮助"><G><path d="M1 8l7-7 7 4-7 8z" fill="#6b62d0" stroke="#2d2a84" /><path d="M1 8v3l7 4 7-7V5l-7 8z" fill="#e8e8f4" stroke="#2d2a84" /><path d="M6 5c2-2 5-1 3 1L7 8" stroke="#ffb640" strokeWidth="1.800" /></G></Tool>
          <Tool label="最小化文档"><Min /></Tool><Tool label="还原文档"><Restore /></Tool><Tool label="关闭文档"><Cross c="#343a44" /></Tool>
        </WindowButtons>
      </TabBar>
      <AppButton aria-label="应用程序菜单">
        <G w={28} h={28}><path d="M2 12l14-1-2 13z" fill="#2c7de0" /><path d="M2 12l14-1-6 5z" fill="#5eb0f8" /><path d="M16 12l10-5-6 10z" fill="#3c92ea" /><path d="M17 22l-1-4 4-5 6 8z" fill="#eef4fa" stroke="#b9c4d0" strokeWidth=".6" /><path d="M26 7l-5 8 5 6z" fill="#d2dce6" /><path d="M4 2l6 6-3 .5-2 2z" fill="#666b73" /></G>
      </AppButton>
      <Ribbon>
        <Group>
          <GroupBody>
            <MeasureGrid>
              <Tool label="智能测量"><Smart /></Tool><Tool label="距离"><Square /></Tool>
              <Tool label="测量距离"><Ruler /></Tool><Tool label="测量角度"><Angle /></Tool>
              <Tool label="法向距离"><Normal /></Tool>
            </MeasureGrid>
          </GroupBody>
          <GroupName>测量</GroupName>
        </Group>
        <Group>
          <GroupBody>
            <BigButton><BigCaption>mv</BigCaption><Ball />属性</BigButton>
            <Stack>
              <RibbonRow><Inspect />几何检查器</RibbonRow>
              <RibbonRow><Seek />目标搜寻</RibbonRow>
              <RibbonRow><Relation />关系颜色</RibbonRow>
            </Stack>
          </GroupBody>
          <GroupName>评估</GroupName>
        </Group>
        <Group>
          <GroupBody>
            {analysis.map(([name, on, art]) => (
              <AnalysisColumn key={name}>
                <RibbonText>{name}</RibbonText>
                <RibbonCheck><Check type="checkbox" defaultChecked={on} />显示</RibbonCheck>
                <RibbonRow>{art}设置</RibbonRow>
              </AnalysisColumn>
            ))}
          </GroupBody>
          <GroupName>分析</GroupName>
        </Group>
      </Ribbon>
      <Workspace>
        <Sidebar>
          <PanelHead>
            <Grip /><PanelTitle>选择</PanelTitle>
            <PanelTools><Tool label="选项"><Tri /></Tool><Tool label="固定"><Pin /></Tool><Tool label="最大化"><Box /></Tool></PanelTools>
          </PanelHead>
          <SelectBody>
            <SelectRow $off disabled><ToolFace $kind="off">{selectArt.define}</ToolFace>编辑定义</SelectRow>
            <SelectRow $off disabled><ToolFace $kind="off">{selectArt.profile}</ToolFace>编辑轮廓</SelectRow>
            <SelectRow $off disabled><ToolFace $kind="off">{selectArt.dynamic}</ToolFace>动态编辑</SelectRow>
            <SelectRow $first><ToolFace $kind="hot">{selectArt.shapes("#6d1420")}</ToolFace>内部</SelectRow>
            <SelectRow><ToolFace $kind="plain">{selectArt.shapes("#b5505a")}</ToolFace>重叠</SelectRow>
          </SelectBody>
          <Gap />
          <PathFinder>
            <PanelHead>
              <Grip /><PanelTitle>路径查找器</PanelTitle>
              <PanelTools><Tool label="选项"><Tri /></Tool><Tool label="固定"><Pin /></Tool><Tool label="最大化"><Box /></Tool><Tool label="关闭"><Cross /></Tool></PanelTools>
            </PanelHead>
            <FinderTabs>
              {finderArt.map((a, i) => <FinderTab key={i} $active={i === 0} aria-label={`标签 ${i + 1}`}>{a}</FinderTab>)}
            </FinderTabs>
            <Tree>
              <TreeRoot>
                <G><path d="M2 4l5-3 5 2v4l-3 2v4l-4 3-3-2z" fill="#5b82b8" stroke="#1e3a68" /><path d="M2 4l4 2 6-3M6 6v9" stroke="#1e3a68" /></G>
                <TreeText $root>曲面练习<Latin>.par</Latin></TreeText>
              </TreeRoot>
              {tree.map(([icon, name, tail, on]) => (
                <li key={name + tail}>
                  <TreeRow $dim={!on}>
                    <Check $tree type="checkbox" defaultChecked={on} />
                    {treeArt[icon]}
                    <TreeText>{name}<Latin>{tail}</Latin></TreeText>
                  </TreeRow>
                </li>
              ))}
            </Tree>
          </PathFinder>
        </Sidebar>
        <Right>
          <Viewport>
            <ZebraSurface />
            <Note><NoteLatin>{"8 "}</NoteLatin>缝合。斑马图。</Note>
            <Triad width="80" height="70" viewBox="0 0 80 70">
              <path d="M1 51l4 4 5-4M5 55v5" stroke="#00d000" strokeWidth="1.500" fill="none" />
              <path d="M64 55H20" stroke="#008a00" strokeWidth="3" /><path d="M16 55l16-4v8z" fill="#00e400" stroke="#007700" strokeWidth=".6" />
              <path d="M64 55V26" stroke="#140a8c" strokeWidth="3" /><path d="M61 34v16" stroke="#d02020" strokeWidth="1" /><path d="M65 19l-4 14h8z" fill="#0000d8" />
              <path d="M60 5h8l-8 10h9" stroke="#2222c8" strokeWidth="1.500" fill="none" /><path d="M59 11l8 9m0-9l-8 9" stroke="#dd1111" strokeWidth="1.500" />
              <circle cx="64" cy="56" r="5" fill="#ffee00" stroke="#8d7a00" />
            </Triad>
          </Viewport>
          <PromptPanel>
            <PanelHead>
              <Grip /><PanelTitle>提示条</PanelTitle>
              <PanelTools>
                <Tool label="放大字体"><G w={13} h={18}><text x="0" y="14" fontSize="15" fontWeight="700" fontFamily="Liberation Serif" fill="#333">A</text><path d="M9 3l2-2 2 2z" fill="#1a3e83" /></G></Tool>
                <Tool label="缩小字体"><G w={12} h={18}><text x="0" y="14" fontSize="11" fontWeight="700" fontFamily="Liberation Serif" fill="#333">A</text><path d="M8 2l2 2 2-2z" fill="#1a3e83" /></G></Tool>
                <Tool label="折叠"><G w={9} h={9}><path d="M1 4l3.500-3L8 4M1 8l3.500-3L8 8" stroke="#111" strokeWidth="1.500" /></G></Tool>
                <Tool label="选项"><Tri /></Tool><Tool label="固定"><Pin /></Tool>
              </PanelTools>
            </PanelHead>
            <PromptText />
          </PromptPanel>
        </Right>
      </Workspace>
      <StatusBar>
        <StatusCell /><StatusCell $w={184} /><StatusCell $w={27} />
        <CommandBox aria-label="命令查找器" defaultValue="命令查找器" />
        <Tool label="执行"><G><path d="M2 14c0-6 3-8 6-8V3l6 5-6 4V9c-2 0-4 1-4 5z" fill="#32a32a" stroke="#14661a" strokeWidth=".8" /></G></Tool>
        <StatusCell $w={10} />
        <StatusIcons>
          {viewIcons.map(([n, a]) => <Tool key={n} label={n}>{a}</Tool>)}
        </StatusIcons>
        <Zoomer>
          <RoundButton aria-label="缩小"><G w={8} h={8}><path d="M0 4h8" stroke="#1f3860" strokeWidth="2" /></G></RoundButton>
          <ZoomRange type="range" min="0" max="100" defaultValue="40" aria-label="缩放级别" />
          <RoundButton aria-label="放大"><G w={8} h={8}><path d="M0 4h8M4 0v8" stroke="#1f3860" strokeWidth="2" /></G></RoundButton>
        </Zoomer>
      </StatusBar>
    </Shell>
  );
}
